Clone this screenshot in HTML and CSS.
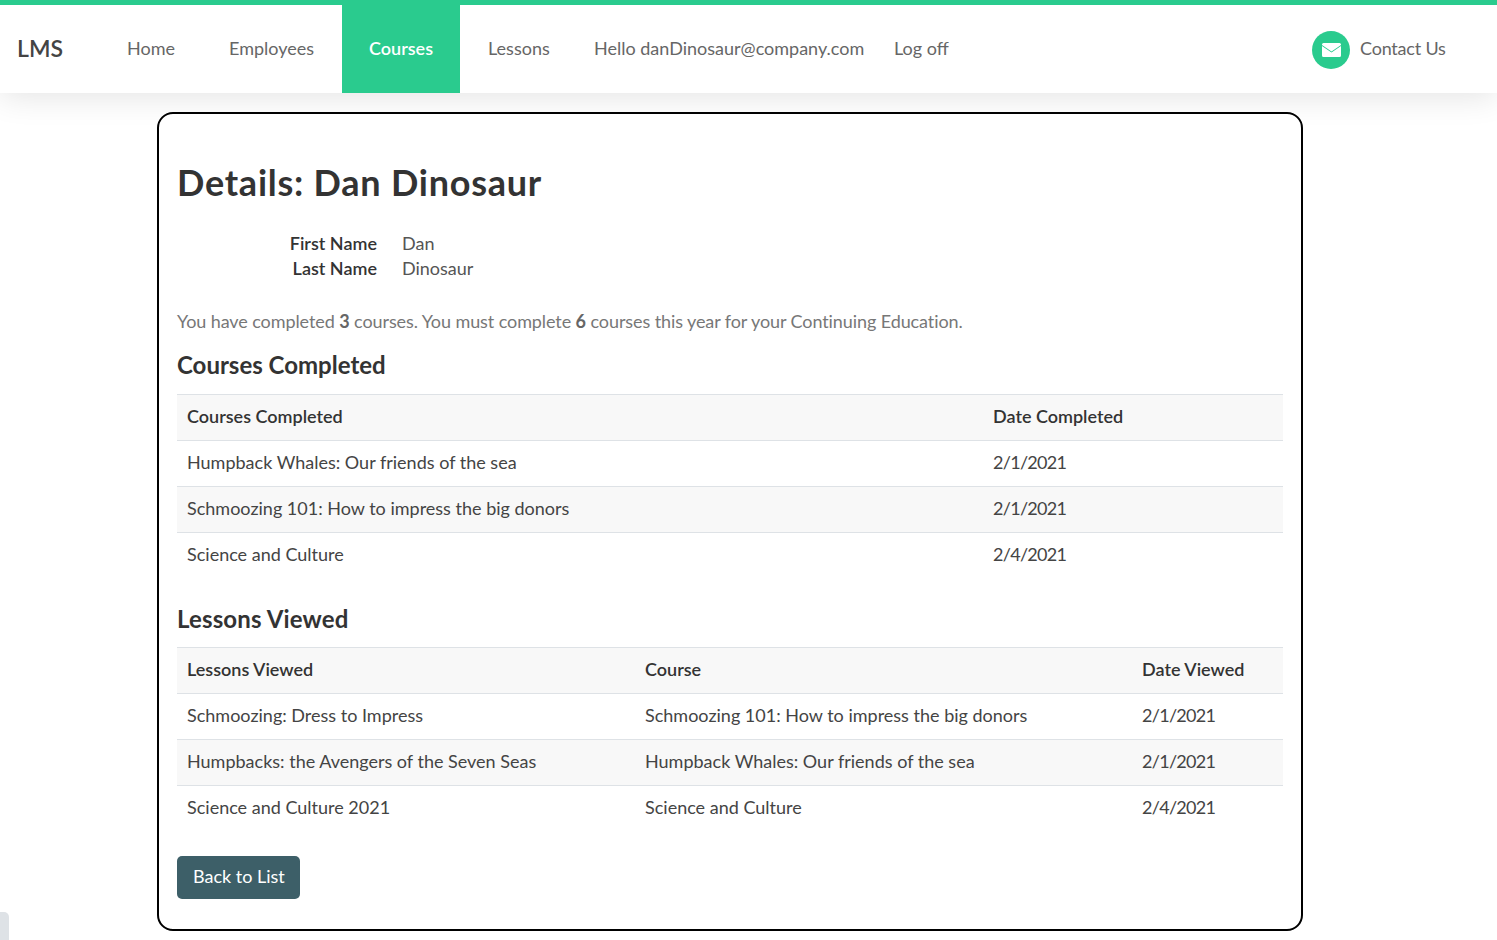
FILE: index.html
```html
<!DOCTYPE html>
<html lang="en">
<head>
  <meta charset="UTF-8">
  <title>Details - LMS</title>
  <link rel="stylesheet" href="styles.css">
</head>
<body>

<!-- === Top Nav === -->
<header class="topbar">
  <a class="brand" href="#">LMS</a>
  <nav class="nav-links">
    <a class="nav-home" href="#">Home</a>
    <a class="nav-employees" href="#">Employees</a>
    <a class="nav-courses active" href="#">Courses</a>
    <a class="nav-lessons" href="#">Lessons</a>
    <a class="nav-hello" href="#">Hello danDinosaur@company.com</a>
    <a class="nav-logoff" href="#">Log off</a>
  </nav>
  <a class="contact" href="#">
    <span class="contact-icon">
      <svg width="19" height="14" viewBox="0 0 19 14">
        <path fill="#fff" d="M1.500 0h16A1.500 1.500 0 0 1 19 1.500v.6l-9.500 6.400L0 2.100v-.6A1.500 1.500 0 0 1 1.500 0z"/>
        <path fill="#fff" d="M0 3l9.500 6.400L19 3v9.500a1.500 1.500 0 0 1-1.500 1.500h-16A1.500 1.500 0 0 1 0 12.500z"/>
      </svg>
    </span>
    <span class="contact-label">Contact Us</span>
  </a>
</header>

<!-- === Details Card === -->
<main class="card">
  <h1>Details: Dan Dinosaur</h1>

  <dl class="person">
    <dt>First Name</dt>
    <dd>Dan</dd>
    <dt>Last Name</dt>
    <dd>Dinosaur</dd>
  </dl>

  <p class="summary">You have completed <b>3</b> courses. You must complete <b>6</b> courses this year for your Continuing Education.</p>

  <h2 class="courses-title">Courses Completed</h2>
  <table class="courses-table">
    <thead>
      <tr><th>Courses Completed</th><th>Date Completed</th></tr>
    </thead>
    <tbody>
      <tr><td>Humpback Whales: Our friends of the sea</td><td class="date">2/1/2021</td></tr>
      <tr><td>Schmoozing 101: How to impress the big donors</td><td class="date">2/1/2021</td></tr>
      <tr><td>Science and Culture</td><td class="date">2/4/2021</td></tr>
    </tbody>
  </table>

  <h2 class="lessons-title">Lessons Viewed</h2>
  <table class="lessons-table">
    <thead>
      <tr><th>Lessons Viewed</th><th>Course</th><th>Date Viewed</th></tr>
    </thead>
    <tbody>
      <tr><td>Schmoozing: Dress to Impress</td><td>Schmoozing 101: How to impress the big donors</td><td class="date">2/1/2021</td></tr>
      <tr><td>Humpbacks: the Avengers of the Seven Seas</td><td>Humpback Whales: Our friends of the sea</td><td class="date">2/1/2021</td></tr>
      <tr><td>Science and Culture 2021</td><td>Science and Culture</td><td class="date">2/4/2021</td></tr>
    </tbody>
  </table>

  <a class="btn-back" href="#">Back to List</a>
</main>

<div class="corner-tab"></div>

</body>
</html>
```

FILE: styles.css
```css
/* ===== Global Styles ===== */
* {
  margin: 0;
  padding: 0;
  box-sizing: border-box;
}
body {
  font-family: 'Lato', 'Noto Sans', sans-serif;
  font-size: 18px;
  color: #212529;
  background: #fff;
  height: 940px;
  overflow: hidden;
}
a {
  text-decoration: none;
}

/* ===== Top Nav ===== */
.topbar {
  display: flex;
  align-items: stretch;
  height: 93px;
  border-top: 5px solid #2acb8e;
  background: #fff;
  box-shadow: 0 4px 30px rgba(0, 0, 0, 0.11);
  font-size: 18px;
}
.brand {
  align-self: center;
  margin-left: 17px;
  margin-bottom: 2px;
  width: 110px;
  font-size: 23px;
  font-weight: 600;
  color: #444;
}
.nav-links {
  display: flex;
  flex: 1;
}
.nav-links a {
  display: flex;
  align-items: center;
  padding-bottom: 2px;
  color: #666;
}
.nav-home { width: 102px; }
.nav-employees { width: 113px; }
.nav-links .active {
  width: 118px;
  justify-content: center;
  background: #2acb8e;
  color: #fff;
  font-weight: 600;
}
.nav-lessons { margin-left: 28px; width: 106px; }
.nav-hello { width: 300px; }
.contact {
  display: flex;
  align-items: center;
  gap: 10px;
  width: 185px;
  color: #666;
}
.contact-icon {
  display: flex;
  align-items: center;
  justify-content: center;
  width: 38px;
  height: 38px;
  margin-top: 2px;
  border-radius: 50%;
  background: #2acb8e;
}
.contact-label {
  padding-bottom: 2px;
  letter-spacing: -0.2px;
}

/* ===== Details Card ===== */
.card {
  width: 1146px;
  height: 819px;
  margin: 19px 0 0 157px;
  padding: 46px 18px 0;
  border: 2px solid #000;
  border-radius: 16px;
  background: #fff;
}
h1 {
  font-size: 36px;
  line-height: 44px;
  font-weight: 700;
  letter-spacing: 0.76px;
  color: #333;
}
h2 {
  margin-bottom: 14px;
  font-size: 24px;
  line-height: 29px;
  font-weight: 700;
  color: #333;
}
.courses-title {
  margin-bottom: 15px;
}
.lessons-title {
  margin-top: 25px;
  letter-spacing: 0.15px;
}
.person {
  display: grid;
  grid-template-columns: 200px 1fr;
  column-gap: 25px;
  margin-top: 27px;
  line-height: 25px;
}
.person dt {
  text-align: right;
  font-weight: 600;
  color: #333;
}
.person dd {
  color: #555;
}
.summary {
  margin-top: 27px;
  margin-bottom: 15px;
  line-height: 27px;
  letter-spacing: -0.09px;
  color: #777;
}
.summary b {
  color: #666;
}

/* ===== Tables ===== */
table {
  width: 100%;
  table-layout: fixed;
  border-collapse: collapse;
  line-height: 21px;
  color: #444;
}
th, td {
  height: 46px;
  padding: 11px 10px 13px;
  text-align: left;
  border-top: 1px solid #dee2e6;
}
th {
  font-weight: 600;
  color: #333;
  background: #f8f8f8;
  border-bottom: 1px solid #dee2e6;
}
td.date {
  letter-spacing: -0.7px;
}
tbody tr:nth-child(even) td {
  background: #f8f8f8;
}
.courses-table th:nth-child(1) { width: 806px; }
.lessons-table th:nth-child(1) { width: 458px; }
.lessons-table th:nth-child(3) { width: 151px; }

.btn-back {
  display: inline-block;
  margin-top: 25px;
  padding: 9px 15px 11px 16px;
  border-radius: 5px;
  background: #3d5f68;
  color: #fff;
  line-height: 23px;
}

/* ===== Corner Tab ===== */
.corner-tab {
  position: absolute;
  left: 0;
  top: 912px;
  width: 9px;
  height: 28px;
  border-radius: 0 5px 0 0;
  background: #dee2e6;
}
```
